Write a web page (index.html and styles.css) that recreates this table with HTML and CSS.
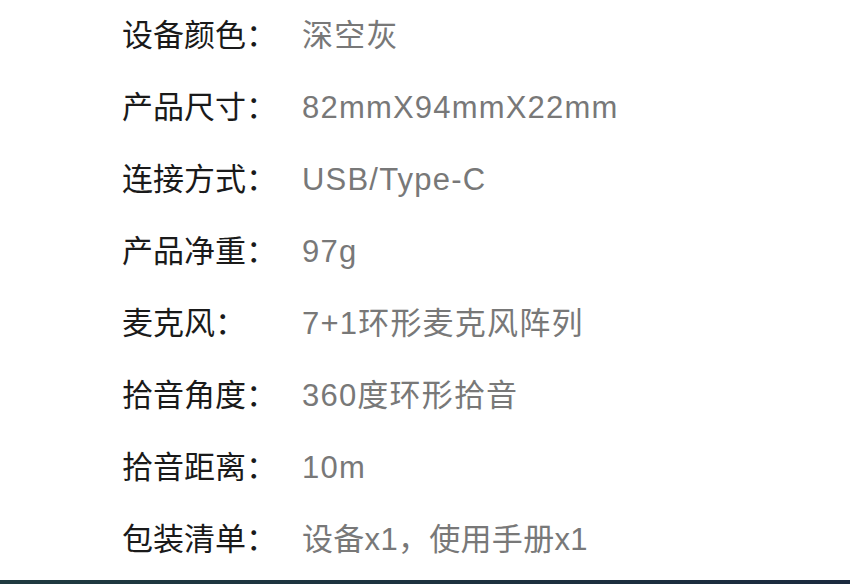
FILE: index.html
```html
<!DOCTYPE html>
<html lang="zh-CN">
<head>
  <meta charset="UTF-8" />
  <meta name="viewport" content="width=device-width, initial-scale=1.0"/>
  <title>产品参数</title>
  <link rel="stylesheet" href="styles.css">
</head>
<body>
  <div id="specs">
    <div class="row"><span class="label">设备颜色：</span><span class="value">深空灰</span></div>
    <div class="row"><span class="label">产品尺寸：</span><span class="value">82mmX94mmX22mm</span></div>
    <div class="row"><span class="label">连接方式：</span><span class="value">USB/Type-C</span></div>
    <div class="row"><span class="label">产品净重：</span><span class="value">97g</span></div>
    <div class="row"><span class="label">麦克风：</span><span class="value">7+1环形麦克风阵列</span></div>
    <div class="row"><span class="label">拾音角度：</span><span class="value">360度环形拾音</span></div>
    <div class="row"><span class="label">拾音距离：</span><span class="value">10m</span></div>
    <div class="row last"><span class="label">包装清单：</span><span class="value">设备x1，使用手册x1</span></div>
  </div>
  <div class="bottom-bar"></div>
</body>
</html>
```

FILE: styles.css
```css
body {
  margin: 0;
  background: #fff;
  font-family: "Liberation Sans", "Noto Sans CJK SC", sans-serif;
  height: 584px;
  overflow: hidden;
}
#specs {
  padding-left: 122px;
  height: 580px;
}
.row {
  display: grid;
  grid-template-columns: 180px auto;
  height: 72px;
  line-height: 72px;
  font-size: 31px;
}
.label {
  color: #1a1a1a;
}
.value {
  color: #787878;
  letter-spacing: 1.2px;
}
.last .value {
  letter-spacing: 0.3px;
}
.bottom-bar {
  height: 4px;
  background: linear-gradient(to right, #1f3a40, #1b2a3e);
}
```
